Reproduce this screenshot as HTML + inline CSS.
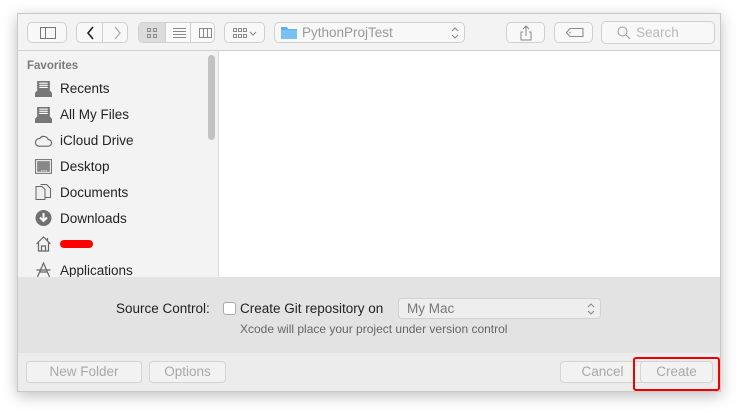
<!DOCTYPE html><html><head><style>
*{box-sizing:border-box;margin:0;padding:0}
body{width:738px;height:413px;background:#fff;font-family:"Liberation Sans",sans-serif;position:relative;overflow:hidden}
.win{position:absolute;left:17px;top:13px;width:704px;height:379px;border:1px solid #c8c8c8;box-shadow:0 4px 14px rgba(0,0,0,.25);background:#fff;overflow:hidden}
.a{position:absolute}
.tb{left:0;top:0;width:704px;height:37px;background:#f3f3f3;border-bottom:1px solid #d0d0d0}
.btn{position:absolute;border:1px solid #d0d0d0;border-radius:5px;background:#f8f8f8}
.side{left:0;top:37px;width:201px;height:226px;background:#f3f3f3;border-right:1px solid #dcdcdc}
.it{position:absolute;left:42px;font-size:13.5px;color:#222}
.ic{position:absolute;left:17px;width:17px;height:16px}
.bot{left:0;top:263px;width:704px;height:76px;background:#e3e3e3}
.bar{left:0;top:339px;width:704px;height:40px;background:#ececec}
.bb{position:absolute;top:8px;height:22px;border:1px solid #d4d4d4;border-radius:4px;background:#f2f2f2;color:#a8a8a8;font-size:13.5px;text-align:center;line-height:20px}
</style></head><body>
<div class="win">
<div class="a tb">
 <div class="btn" style="left:9px;top:8px;width:40px;height:21px"><svg class="a" style="left:12px;top:4px" width="16" height="12"><rect x=".5" y=".5" width="15" height="11" fill="none" stroke="#777"/><line x1="5.5" y1="0" x2="5.5" y2="12" stroke="#777"/></svg></div>
 <div class="btn" style="left:58px;top:8px;width:52px;height:21px"><div class="a" style="left:25px;top:0;width:1px;height:19px;background:#d0d0d0"></div><svg class="a" style="left:7px;top:3px" width="40" height="14"><path d="M9 1L4 7l5 6" fill="none" stroke="#222" stroke-width="1.6"/><path d="M31 1l5 6-5 6" fill="none" stroke="#aaa" stroke-width="1.3"/></svg></div>
 <div class="btn" style="left:120px;top:8px;width:77px;height:21px;background:#fafafa"><div class="a" style="left:0;top:0;width:26px;height:19px;background:#dcdcdc;border-radius:4px 0 0 4px"></div><div class="a" style="left:26px;top:0;width:1px;height:19px;background:#d0d0d0"></div><div class="a" style="left:51px;top:0;width:1px;height:19px;background:#d0d0d0"></div>
 <svg class="a" style="left:8px;top:5px" width="65" height="10"><g fill="none" stroke="#888"><rect x=".5" y=".5" width="3" height="3"/><rect x="6.5" y=".5" width="3" height="3"/><rect x=".5" y="6.5" width="3" height="3"/><rect x="6.5" y="6.5" width="3" height="3"/><path d="M26 .5h13M26 3.5h13M26 6.5h13M26 9.5h13"/><rect x="52.5" y=".5" width="12" height="9"/><path d="M56.5 0v10M60.5 0v10"/></g></svg></div>
 <div class="btn" style="left:206px;top:8px;width:41px;height:21px"><svg class="a" style="left:8px;top:5px" width="26" height="10"><g fill="none" stroke="#888"><rect x=".5" y=".5" width="3" height="3"/><rect x="5.5" y=".5" width="3" height="3"/><rect x="10.5" y=".5" width="3" height="3"/><rect x=".5" y="6.5" width="3" height="3"/><rect x="5.5" y="6.5" width="3" height="3"/><rect x="10.5" y="6.5" width="3" height="3"/><path d="M17 4l3 3 3-3"/></g></svg></div>
 <div class="btn" style="left:256px;top:8px;width:191px;height:21px"><svg class="a" style="left:6px;top:3px" width="16" height="13"><path d="M0 1h6l1 2h9v10H0z" fill="#5fb0ee"/><rect x="0" y="4" width="16" height="9" fill="#79c0f4"/></svg><span class="a" style="left:27px;top:2px;font-size:13.5px;color:#999">PythonProjTest</span><svg class="a" style="left:176px;top:3px" width="8" height="14"><path d="M1 5l3-3 3 3M1 9l3 3 3-3" fill="none" stroke="#888"/></svg></div>
 <div class="btn" style="left:488px;top:8px;width:39px;height:21px"><svg class="a" style="left:13px;top:2px" width="12" height="16"><path d="M3 7H1v8h10V7H9M6 11V1M3 4l3-3 3 3" fill="none" stroke="#888"/></svg></div>
 <div class="btn" style="left:536px;top:8px;width:39px;height:21px"><svg class="a" style="left:11px;top:5px" width="18" height="10"><path d="M4 .5h13v8H4L.5 4.5z" fill="none" stroke="#888"/><circle cx="4" cy="4.5" r=".8" fill="#888"/></svg></div>
 <div class="btn" style="left:583px;top:7px;width:114px;height:23px"><svg class="a" style="left:15px;top:4px" width="14" height="14"><circle cx="5.5" cy="5.5" r="4.5" fill="none" stroke="#999"/><path d="M9 9l4 4" stroke="#999"/></svg><span class="a" style="left:34px;top:3px;font-size:13.5px;color:#b8b8b8">Search</span></div>
</div>
<div class="a side">
 <div class="a" style="left:9px;top:9px;font-size:11.5px;color:#666;font-weight:bold;opacity:.85">Favorites</div>
 <div class="a" style="left:190px;top:4px;width:7px;height:85px;background:#c2c2c2;border-radius:4px"></div>
 <svg class="ic" style="top:30px" viewBox="0 0 16 15"><path d="M2 0h12v9l2 2v4H0v-4l2-2z" fill="#777"/><path d="M4 2h8M4 4h8M4 6h8" stroke="#fff"/></svg><div class="it" style="top:30px">Recents</div>
 <svg class="ic" style="top:56px" viewBox="0 0 16 15"><path d="M2 0h12v9l2 2v4H0v-4l2-2z" fill="#777"/><path d="M4 2h8M4 4h8M4 6h8" stroke="#fff"/></svg><div class="it" style="top:56px">All My Files</div>
 <svg class="ic" style="top:82px" viewBox="0 0 18 13"><path d="M4 12h10a3.5 3.5 0 0 0 0-7A5 5 0 0 0 5 4a4 4 0 0 0-1 8z" fill="none" stroke="#666" stroke-width="1.2"/></svg><div class="it" style="top:82px">iCloud Drive</div>
 <svg class="ic" style="top:108px" viewBox="0 0 16 15"><rect x=".5" y=".5" width="15" height="13" fill="none" stroke="#777"/><rect x="2" y="2" width="12" height="10" fill="#888"/><path d="M6 11h1M8 11h1M10 11h1" stroke="#fff"/></svg><div class="it" style="top:108px">Desktop</div>
 <svg class="ic" style="top:133px" viewBox="0 0 16 16"><path d="M.5 2.5h6l3 3v10h-9z M5 .5h6l4 4v9h-5" fill="#eee" stroke="#666"/></svg><div class="it" style="top:134px">Documents</div>
 <svg class="ic" style="top:159px" viewBox="0 0 16 16"><circle cx="8" cy="8" r="8" fill="#707070"/><path d="M8 3v8M4.5 7.5L8 11l3.5-3.5" stroke="#fff" stroke-width="2" fill="none"/></svg><div class="it" style="top:160px">Downloads</div>
 <svg class="ic" style="top:185px" viewBox="0 0 16 16"><path d="M1 8L8 1l7 7M3 6v9h10V6M6 15v-5h4v5M12 2v3" fill="none" stroke="#666" stroke-width="1.2"/></svg><div class="a" style="left:42px;top:189px;width:33px;height:8px;background:#f00;border-radius:4px"></div>
 <svg class="ic" style="top:210px" viewBox="0 0 16 16"><path d="M2 16L8 2l6 14M4 11h8M1 9h14" fill="none" stroke="#666" stroke-width="1.2"/></svg><div class="it" style="top:212px">Applications</div>
</div>
<div class="a bot">
 <div class="a" style="left:98px;top:24px;font-size:13.5px;color:#222">Source Control:</div>
 <div class="a" style="left:205px;top:25px;width:13px;height:13px;border:1px solid #aaa;border-radius:3px;background:#fff"></div>
 <div class="a" style="left:222px;top:24px;font-size:13.5px;color:#222">Create Git repository on</div>
 <div class="a" style="left:380px;top:21px;width:203px;height:21px;border:1px solid #d2d2d2;border-radius:4px;background:#eee"><span class="a" style="left:8px;top:2px;font-size:13.5px;color:#777">My Mac</span><svg class="a" style="left:188px;top:3px" width="8" height="14"><path d="M1 5l3-3 3 3M1 9l3 3 3-3" fill="none" stroke="#888"/></svg></div>
 <div class="a" style="left:222px;top:45px;font-size:12px;color:#666">Xcode will place your project under version control</div>
</div>
<div class="a bar">
 <div class="bb" style="left:8px;width:116px">New Folder</div>
 <div class="bb" style="left:131px;width:77px">Options</div>
 <div class="bb" style="left:542px;width:85px">Cancel</div>
 <div class="bb" style="left:622px;width:73px">Create</div>
 <div class="a" style="left:615px;top:4px;width:87px;height:34px;border:2px solid #e00;border-radius:3px"></div>
</div>
</div>
</body></html>
